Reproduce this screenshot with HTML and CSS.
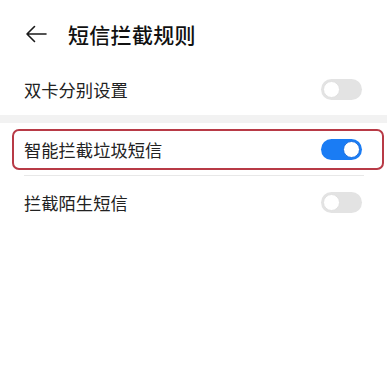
FILE: index.html
```html
<!DOCTYPE html>
<html lang="zh-CN">
<head>
  <meta charset="UTF-8" />
  <meta name="viewport" content="width=device-width, initial-scale=1.0"/>
  <title>短信拦截规则</title>
  <link rel="stylesheet" href="styles.css">
</head>
<body>
  <header class="top">
    <svg class="back" width="22" height="18" viewBox="0 0 22 18">
      <path d="M21 9H2M9.5 1.5L2 9l7.5 7.5" fill="none" stroke="#1a1a1a" stroke-width="1.6" stroke-linecap="round" stroke-linejoin="round"/>
    </svg>
    <h1>短信拦截规则</h1>
  </header>

  <div class="row row-first">
    <span class="label">双卡分别设置</span>
    <span class="switch"><span class="knob"></span></span>
  </div>

  <div class="band"></div>

  <div class="row row-hl">
    <span class="label">智能拦截垃圾短信</span>
    <span class="switch on"><span class="knob"></span></span>
  </div>

  <div class="divider"></div>

  <div class="row row-last">
    <span class="label">拦截陌生短信</span>
    <span class="switch"><span class="knob"></span></span>
  </div>
</body>
</html>
```

FILE: styles.css
```css
* { margin: 0; padding: 0; box-sizing: border-box; }
body { font-family: "Noto Sans CJK SC", "Noto Sans", sans-serif; background: #fff; color: #222; }

.top { height: 67px; display: flex; align-items: center; padding-left: 25px; }
.back { display: block; }
.top h1 { margin-left: 21px; font-size: 21px; font-weight: 500; color: #111; letter-spacing: 0.3px; }

.row { display: flex; align-items: center; justify-content: space-between; padding: 0 25px 0 24px; }
.label { font-size: 17.3px; color: #222; }
.row-first { height: 48px; padding-bottom: 3px; }
.row-last { height: 52px; }

.band { height: 8px; background: #f2f2f2; margin-bottom: 6px; }

.row-hl { height: 41px; margin: 0 3px 0 12px; padding: 0 20px 0 10px; border: 2px solid #b83a46; border-radius: 7px; }

.divider { height: 1px; background: #e8e8e8; margin: 5px 23px 0 24px; }

.switch { width: 41px; height: 21px; border-radius: 11px; background: #e3e3e3; display: flex; align-items: center; padding: 0 2px; }
.knob { width: 17px; height: 17px; border-radius: 50%; background: #fff; border: 1px solid #e0e0e0; }
.switch.on { background: #1a7cf4; justify-content: flex-end; }
.switch.on .knob { border: 1.5px solid #1a6fe0; }
```
